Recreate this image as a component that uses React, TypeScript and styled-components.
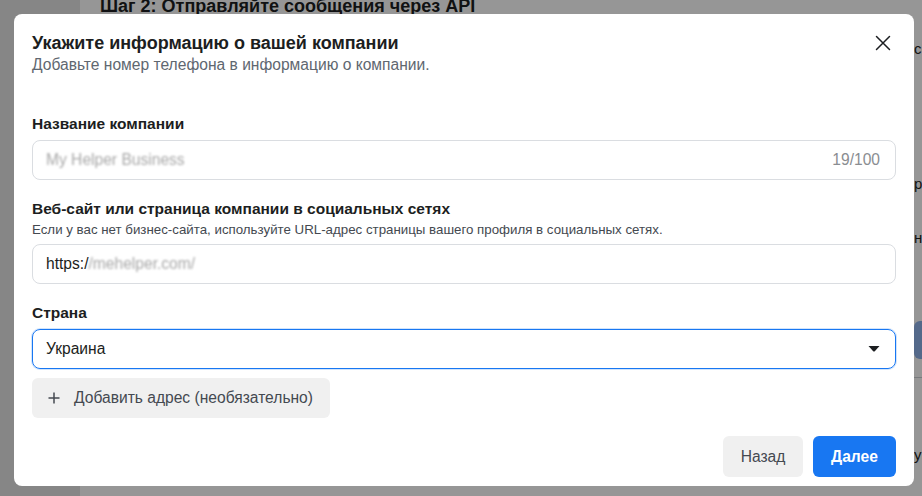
import React from 'react'
import styled, { createGlobalStyle } from 'styled-components'

const GlobalStyle = createGlobalStyle`
  html, body {
    margin: 0;
    padding: 0;
    width: 922px;
    height: 496px;
    overflow: hidden;
    font-family: "Liberation Sans", Arial, sans-serif;
  }
`

// page behind the dialog
const Page = styled.div`
  display: flex;
  width: 922px;
  height: 496px;
  background: #fff;
  overflow: hidden;
`

const SideNav = styled.div`
  width: 80px;
  flex-shrink: 0;
  background: #e4e4e4;
`

const Main = styled.div`
  flex: 1;
  display: flex;
  padding-left: 20px;
`

const MainColumn = styled.div`
  width: 814px;
  flex-shrink: 0;
`

const StepTitle = styled.h2`
  margin: -5px 0 0 0;
  font-size: 18px;
  line-height: 22px;
  font-weight: 700;
  color: #1c1e21;
`

const SideColumn = styled.div`
  display: flex;
  flex-direction: column;
  padding-top: 40px;
  font-size: 15px;
  color: #1c1e21;
`

const SideLine = styled.div<{ $gap: number }>`
  margin-top: ${p => p.$gap}px;
  line-height: 18px;
  white-space: nowrap;
`

const SideButton = styled.div`
  margin-top: 74px;
  width: 60px;
  height: 38px;
  border-radius: 6px;
  background: #8fb3ea;
`

const SideRule = styled.div`
  margin-top: 18px;
  height: 1px;
  background: #ccd0d5;
`

// dialog
const Overlay = styled.div`
  position: fixed;
  inset: 0;
  background: rgba(0, 0, 0, 0.41);
  display: flex;
  align-items: flex-start;
  padding: 14px 0 0 14px;
`

const Dialog = styled.div`
  width: 900px;
  height: 472px;
  flex-shrink: 0;
  background: #fff;
  border-radius: 8px;
  display: flex;
  flex-direction: column;
  box-sizing: border-box;
  padding: 0 18px 9px 18px;
`

const Header = styled.div`
  display: flex;
  justify-content: space-between;
  align-items: flex-start;
  padding-top: 18px;
`

const Title = styled.div`
  font-size: 18px;
  line-height: 22px;
  font-weight: 700;
  color: #1c1e21;
`

const Subtitle = styled.div`
  margin-top: 1px;
  font-size: 15.6px;
  line-height: 19px;
  color: #606770;
`

const CloseButton = styled.button`
  border: none;
  background: none;
  padding: 0;
  margin: 3px 5px 0 0;
  width: 16px;
  height: 16px;
  display: flex;
  align-items: center;
  justify-content: center;
  cursor: pointer;
`

const Body = styled.div`
  flex: 1;
  display: flex;
  flex-direction: column;
  padding-top: 40px;
`

const Field = styled.div`
  display: flex;
  flex-direction: column;
  margin-bottom: 19px;
`

const Label = styled.div`
  font-size: 15.5px;
  line-height: 19px;
  font-weight: 700;
  color: #1c1e21;
  margin-bottom: 7px;
`

const Help = styled.div`
  font-size: 13.3px;
  line-height: 18px;
  color: #444950;
  margin: -4px 0 5px 0;
`

const InputBox = styled.div<{ $focused?: boolean }>`
  height: 40px;
  box-sizing: border-box;
  border: 1px solid ${p => (p.$focused ? '#1877f2' : '#dadde1')};
  box-shadow: ${p => (p.$focused ? '0 0 0 1px rgba(24,119,242,0.2)' : 'none')};
  border-radius: 8px;
  display: flex;
  align-items: center;
  padding: 0 15px 0 13px;
  font-size: 15.6px;
  color: #1c1e21;
`

const Value = styled.span`
  flex: 1;
  white-space: nowrap;
`

const Hidden = styled.span`
  color: #a8a8a8;
  filter: blur(0.9px);
`

const Counter = styled.span`
  color: #8a8d91;
`

const AddButton = styled.button`
  align-self: flex-start;
  margin-top: -10px;
  height: 40px;
  border: none;
  border-radius: 6px;
  background: #f0f0f0;
  display: flex;
  align-items: center;
  gap: 14px;
  padding: 0 17px 0 16px;
  font-family: inherit;
  font-size: 15.6px;
  color: #444950;
  cursor: pointer;
`

const Footer = styled.div`
  display: flex;
  justify-content: flex-end;
  gap: 10px;
`

const FooterButton = styled.button<{ $primary?: boolean }>`
  height: 41px;
  min-width: ${p => (p.$primary ? 83 : 80)}px;
  border: none;
  border-radius: 6px;
  padding: 0 12px;
  font-family: inherit;
  font-size: 15.6px;
  font-weight: ${p => (p.$primary ? 700 : 400)};
  background: ${p => (p.$primary ? '#1877f2' : '#f0f0f0')};
  color: ${p => (p.$primary ? '#fff' : '#444950')};
  cursor: pointer;
`

export default function App() {
  return (
    <>
      <GlobalStyle />
      <Page>
        <SideNav />
        <Main>
          <MainColumn>
            <StepTitle>Шаг 2: Отправляйте сообщения через API</StepTitle>
          </MainColumn>
          <SideColumn>
            <SideLine $gap={0}>сообщения</SideLine>
            <SideLine $gap={117}>регистрация</SideLine>
            <SideLine $gap={36}>настройки</SideLine>
            <SideButton />
            <SideRule />
            <SideLine $gap={68}>укажите</SideLine>
          </SideColumn>
        </Main>
      </Page>

      <Overlay>
        <Dialog>
          <Header>
            <div>
              <Title>Укажите информацию о вашей компании</Title>
              <Subtitle>Добавьте номер телефона в информацию о компании.</Subtitle>
            </div>
            <CloseButton aria-label="Закрыть">
              <svg width="16" height="16" viewBox="0 0 16 16">
                <path d="M1.5 1.5 L14.5 14.5 M14.5 1.5 L1.5 14.5" stroke="#1c1e21" strokeWidth="1.5" strokeLinecap="round" />
              </svg>
            </CloseButton>
          </Header>

          <Body>
            <Field>
              <Label>Название компании</Label>
              <InputBox>
                <Value><Hidden>My Helper Business</Hidden></Value>
                <Counter>19/100</Counter>
              </InputBox>
            </Field>

            <Field>
              <Label>Веб-сайт или страница компании в социальных сетях</Label>
              <Help>Если у вас нет бизнес-сайта, используйте URL-адрес страницы вашего профиля в социальных сетях.</Help>
              <InputBox>
                <Value>https:/<Hidden>/mehelper.com/</Hidden></Value>
              </InputBox>
            </Field>

            <Field>
              <Label>Страна</Label>
              <InputBox $focused>
                <Value>Украина</Value>
                <svg width="12" height="6" viewBox="0 0 12 6">
                  <path d="M0.5 0 L11.5 0 L6.8 5.2 Q6 6 5.2 5.2 Z" fill="#1c1e21" />
                </svg>
              </InputBox>
            </Field>

            <AddButton>
              <svg width="12" height="12" viewBox="0 0 12 12">
                <path d="M6 0.5 V11.5 M0.5 6 H11.5" stroke="#444950" strokeWidth="1.5" />
              </svg>
              Добавить адрес (необязательно)
            </AddButton>
          </Body>

          <Footer>
            <FooterButton>Назад</FooterButton>
            <FooterButton $primary>Далее</FooterButton>
          </Footer>
        </Dialog>
      </Overlay>
    </>
  )
}
